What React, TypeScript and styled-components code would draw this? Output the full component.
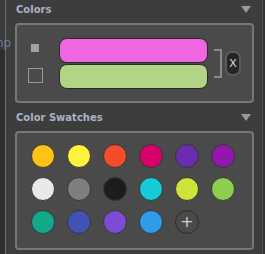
import React from "react";
import styled, { createGlobalStyle } from "styled-components";

const Global = createGlobalStyle`
  html, body { margin: 0; padding: 0; background: #3d3d3d; }
  body { font-family: "DejaVu Sans", Verdana, sans-serif; }
  #root { width: 265px; height: 254px; overflow: hidden; }
`;

const Frame = styled.div`
  display: flex;
  width: 265px;
  height: 254px;
  overflow: hidden;
  background: #3d3d3d;
`;

const LeftStrip = styled.div`
  position: relative;
  width: 5px;
  display: flex;
  flex-direction: column;
  border-right: 1px solid #6d6d6d;
`;

const StripTop = styled.div`
  height: 50px;
  background: #3a3a3a;
`;

const StripBottom = styled.div`
  flex: 1;
  background: #2e2e2e;
`;

const StripLabel = styled.span`
  position: absolute;
  left: -4px;
  top: 36px;
  font-size: 12px;
  color: #7f8fa8;
  white-space: nowrap;
  opacity: 0.8;
`;

const RightStrip = styled.div`
  width: 2px;
  background: #333;
  border-left: 1px solid #555;
`;

const Panel = styled.div`
  flex: 1;
  display: flex;
  flex-direction: column;
  padding: 0 8px 0 9px;
  margin-top: -5px;
`;

const Header = styled.div`
  height: 28px;
  display: flex;
  align-items: center;
  justify-content: space-between;
  padding-left: 1px;
`;

const Title = styled.span`
  font-size: 10px;
  font-weight: bold;
  color: #aab2c4;
`;

const Caret = styled.span`
  width: 0;
  height: 0;
  margin-right: 3px;
  border-left: 5px solid transparent;
  border-right: 5px solid transparent;
  border-top: 7px solid #9a9a9a;
`;

const Box = styled.div`
  background: #4a4a4a;
  border: 2px solid #777;
  border-radius: 4px;
`;

const ColorsBox = styled(Box)`
  height: 76px;
  display: flex;
  align-items: center;
  padding-left: 10px;
`;

const Markers = styled.div`
  width: 16px;
  display: flex;
  flex-direction: column;
  align-items: center;
  gap: 16px;
  margin-right: 16px;
`;

const FilledSquare = styled.div`
  width: 8px;
  height: 8px;
  background: #a2a2a2;
`;

const EmptySquare = styled.div`
  width: 13px;
  height: 13px;
  border: 1px solid #9a9a9a;
`;

const Bars = styled.div`
  display: flex;
  flex-direction: column;
  gap: 1px;
`;

const Bar = styled.div<{ $color: string }>`
  width: 147px;
  height: 23px;
  background: ${(p) => p.$color};
  border: 1px solid #2a2a2a;
  border-radius: 8px;
`;

const Bracket = styled.div`
  width: 6px;
  height: 25px;
  margin-left: 6px;
  border: 2px solid #8a8a8a;
  border-left: none;
`;

const CloseButton = styled.div`
  width: 12px;
  height: 21px;
  margin-left: 3px;
  background: #262626;
  border: 2px solid #5a5a5a;
  border-radius: 7px;
  display: flex;
  align-items: center;
  justify-content: center;
  color: #d8dde6;
  font-size: 11px;
  font-family: "DejaVu Sans", sans-serif;
`;

const SwatchBox = styled(Box)`
  display: grid;
  grid-template-columns: repeat(6, 24px);
  column-gap: 12px;
  row-gap: 9px;
  padding: 11px 0 14px 14px;
`;

const Swatch = styled.div<{ $color: string }>`
  width: 24px;
  height: 24px;
  box-sizing: border-box;
  border-radius: 50%;
  background: ${(p) => p.$color};
  border: 1px solid #363636;
`;

const AddSwatch = styled.div`
  width: 24px;
  height: 24px;
  box-sizing: border-box;
  border-radius: 50%;
  border: 1px solid #2c2c2c;
  display: flex;
  align-items: center;
  justify-content: center;
  color: #cfcfcf;
  font-size: 16px;
  line-height: 1;
`;

const swatches = [
  "#fec314", "#fef33c", "#f44d2c", "#d8006a", "#6a2db0", "#9317ae",
  "#e8e8e8", "#7e7e7e", "#1c1c1c", "#14cbd6", "#cfe33c", "#8dcd50",
  "#12a98a", "#4152b4", "#7d4cd4", "#2e9cea",
];

export default function App() {
  return (
    <>
      <Global />
      <Frame>
        <LeftStrip>
          <StripTop />
          <StripBottom />
          <StripLabel>np</StripLabel>
        </LeftStrip>
        <Panel>
          <Header>
            <Title>Colors</Title>
            <Caret />
          </Header>
          <ColorsBox>
            <Markers>
              <FilledSquare />
              <EmptySquare />
            </Markers>
            <Bars>
              <Bar $color="#f065e0" />
              <Bar $color="#b1d485" />
            </Bars>
            <Bracket />
            <CloseButton>X</CloseButton>
          </ColorsBox>
          <Header>
            <Title>Color Swatches</Title>
            <Caret />
          </Header>
          <SwatchBox>
            {swatches.map((c) => (
              <Swatch key={c} $color={c} />
            ))}
            <AddSwatch>+</AddSwatch>
          </SwatchBox>
        </Panel>
        <RightStrip />
      </Frame>
    </>
  );
}
